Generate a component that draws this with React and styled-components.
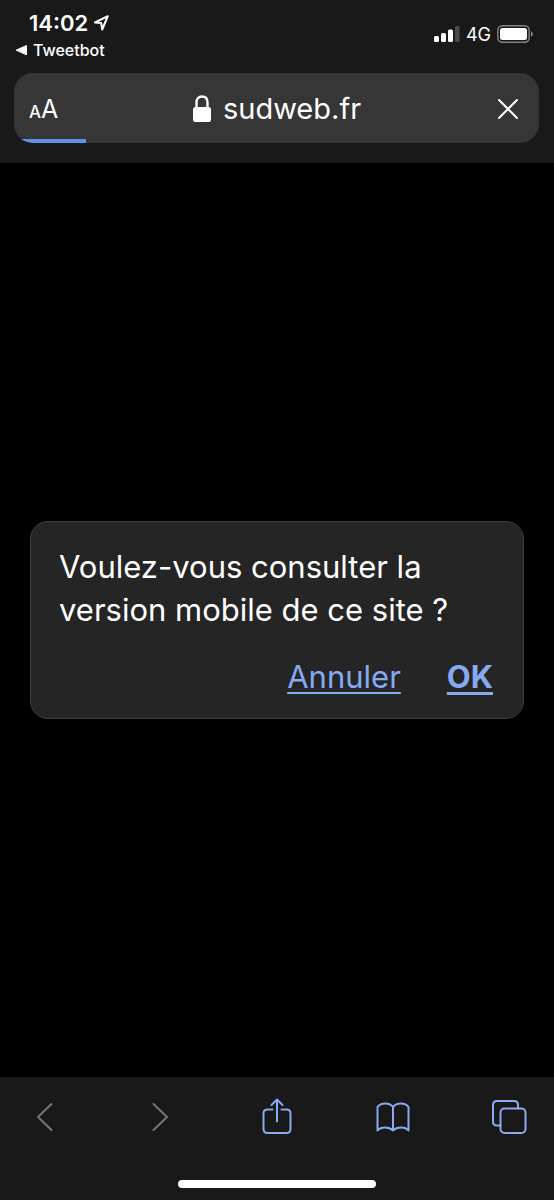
import React from "react";
import styled, { createGlobalStyle } from "styled-components";

const GlobalStyle = createGlobalStyle`
  *, *::before, *::after { box-sizing: border-box; }
  body {
    margin: 0;
    background: #000;
    color: #fff;
    font-family: Inter, "Liberation Sans", sans-serif;
  }
  button { font: inherit; color: inherit; background: none; border: 0; padding: 0; cursor: pointer; }
  svg { display: block; flex: none; }
`;

const Screen = styled.div`
  min-height: 100vh;
  display: flex;
  flex-direction: column;
`;

const Header = styled.header`
  background: #191919;
  padding: 11px 15px 20px 14px;
`;

const StatusBar = styled.div`
  display: flex;
  justify-content: space-between;
  height: 62px;
`;

const StatusLeft = styled.div`
  display: flex;
  flex-direction: column;
  align-items: flex-start;
`;

const Clock = styled.div`
  display: flex;
  align-items: center;
  gap: 6px;
  padding-left: 15px;
  font-size: 22px;
  line-height: 24px;
  font-weight: 600;
`;

const BackToApp = styled.button`
  display: flex;
  align-items: center;
  gap: 6px;
  padding-left: 2px;
  font-size: 16px;
  line-height: 30px;
  font-weight: 500;
`;

const StatusRight = styled.div`
  display: flex;
  align-items: center;
  gap: 6px;
  height: 46px;
  padding-right: 6px;
  font-size: 18px;
`;

const AddressBar = styled.div`
  position: relative;
  overflow: hidden;
  display: grid;
  grid-template-columns: 64px 1fr 64px;
  align-items: center;
  height: 70px;
  padding-top: 2px;
  border-radius: 19px;
  background: #363636;
`;

const TextSizeButton = styled.button`
  display: flex;
  align-items: baseline;
  padding-left: 15px;
  padding-top: 2px;
  font-size: 25px;
  line-height: 32px;
`;

const SmallLetter = styled.span`
  font-size: 17px;
  font-weight: 500;
`;

const SiteButton = styled.button`
  display: flex;
  align-items: center;
  justify-content: center;
  gap: 11px;
  font-size: 29px;
  line-height: 40px;
`;

const StopButton = styled.button`
  display: flex;
  justify-content: flex-end;
  padding-right: 20px;
`;

const Progress = styled.div`
  position: absolute;
  left: 0;
  bottom: 0;
  width: 72px;
  height: 4px;
  background: #5e93e8;
`;

const Page = styled.main`
  flex: 1;
  display: flex;
  align-items: center;
  padding: 30px;
`;

const Dialog = styled.section`
  flex: 1;
  padding: 23px 30px 19px 28px;
  border: 1px solid #3f3f3f;
  border-radius: 18px;
  background: #252525;
`;

const Message = styled.p`
  margin: 0;
  font-size: 31px;
  line-height: 43px;
`;

const Actions = styled.div`
  display: flex;
  justify-content: flex-end;
  gap: 46px;
  margin-top: 24px;
`;

const Action = styled.button`
  font-size: 31px;
  line-height: 44px;
  font-weight: ${(p) => (p.$strong ? 700 : 400)};
  color: #86aaf2;
  text-decoration: underline;
  text-decoration-thickness: ${(p) => (p.$strong ? 3 : 2)}px;
  text-decoration-skip-ink: none;
  text-underline-offset: 4px;
`;

const Footer = styled.footer`
  display: flex;
  flex-direction: column;
  align-items: center;
  padding: 18px 16px 12px;
  background: #191919;
`;

const Toolbar = styled.nav`
  align-self: stretch;
  display: flex;
  justify-content: space-between;
`;

const ToolButton = styled.button`
  display: flex;
  align-items: center;
  justify-content: center;
  width: 58px;
  height: 44px;
  color: #8aaaf0;
  &:disabled { color: #767676; cursor: default; }
`;

const HomeIndicator = styled.div`
  width: 38%;
  height: 8px;
  margin-top: 41px;
  border-radius: 4px;
  background: #fff;
`;

const Icon = ({ width = 36, height = 36, stroke = 2, children }) => (
  <svg width={width} height={height} viewBox={`0 0 ${width} ${height}`} fill="none"
    stroke="currentColor" strokeWidth={stroke} strokeLinecap="round" strokeLinejoin="round" aria-hidden="true">
    {children}
  </svg>
);

export default function App() {
  return (
    <Screen>
      <GlobalStyle />
      <Header>
        <StatusBar>
          <StatusLeft>
            <Clock>
              14:02
              <Icon width={15} height={16}>
                <path d="M1 7.5 L13.8 1.2 L8.2 14.5 L7.2 8 Z" />
              </Icon>
            </Clock>
            <BackToApp type="button">
              <Icon width={11} height={10} stroke={1}>
                <path d="M0.5 5 L10.5 0.5 V9.5 Z" fill="currentColor" />
              </Icon>
              Tweetbot
            </BackToApp>
          </StatusLeft>
          <StatusRight>
            <svg width="26" height="16" viewBox="0 0 26 16" fill="#fff" aria-hidden="true">
              <rect x="0" y="10" width="5" height="6" rx="1.5" />
              <rect x="7" y="7" width="5" height="9" rx="1.5" />
              <rect x="14" y="3.5" width="5" height="12.5" rx="1.5" />
              <rect x="21" y="0" width="4.5" height="16" rx="1.5" fill="#4b4b4b" />
            </svg>
            4G
            <svg width="36" height="18" viewBox="0 0 36 18" aria-hidden="true">
              <rect x="0.8" y="0.8" width="31.4" height="16.4" rx="4.5" fill="none" stroke="#858585" strokeWidth="1.4" />
              <rect x="3" y="3" width="27" height="12" rx="2.5" fill="#fff" />
              <path d="M34 6.2 Q36 7.2 36 9 Q36 10.8 34 11.8 Z" fill="#858585" />
            </svg>
          </StatusRight>
        </StatusBar>
        <AddressBar>
          <TextSizeButton type="button" aria-label="AA">
            <SmallLetter>A</SmallLetter>A
          </TextSizeButton>
          <SiteButton type="button">
            <svg width="20" height="28" viewBox="0 0 20 28" aria-hidden="true">
              <path d="M4.5 13 V7.5 C4.5 3.6 6.8 1.5 10 1.5 S15.5 3.6 15.5 7.5 V13" fill="none" stroke="#fff" strokeWidth="2.4" />
              <rect x="1" y="12" width="18" height="15" rx="2.5" fill="#fff" />
            </svg>
            sudweb.fr
          </SiteButton>
          <StopButton type="button" aria-label="Arrêter le chargement">
            <Icon width={22} height={22}>
              <path d="M2 2 L20 20 M20 2 L2 20" />
            </Icon>
          </StopButton>
          <Progress />
        </AddressBar>
      </Header>
      <Page>
        <Dialog role="dialog" aria-labelledby="question">
          <Message id="question">Voulez-vous consulter la version mobile de ce site ?</Message>
          <Actions>
            <Action type="button">Annuler</Action>
            <Action type="button" $strong>OK</Action>
          </Actions>
        </Dialog>
      </Page>
      <Footer>
        <Toolbar aria-label="Navigation">
          <ToolButton type="button" disabled aria-label="Page précédente">
            <Icon><path d="M24.5 5 L11 18 L24.5 31" /></Icon>
          </ToolButton>
          <ToolButton type="button" disabled aria-label="Page suivante">
            <Icon><path d="M10.5 5 L24 18 L10.5 31" /></Icon>
          </ToolButton>
          <ToolButton type="button" aria-label="Partager">
            <Icon width={36} height={40}>
              <path d="M13.5 12.5 H8.5 Q4.5 12.5 4.5 16.5 V32 Q4.5 36 8.500 36 H27.5 Q31.5 36 31.5 32 V16.5 Q31.5 12.5 27.5 12.5 H22.5" />
              <path d="M18 24.5 V3 M12.5 8 L18 2.5 L23.5 8" />
            </Icon>
          </ToolButton>
          <ToolButton type="button" aria-label="Signets">
            <Icon>
              <path d="M18 8 Q15.5 4.5 10 4.5 Q5 4.500 2.5 8 V31.5 Q5 28.5 10 28.5 Q15 28.5 18 31.5 Q21 28.5 26 28.5 Q31 28.5 33.5 31.5 V8 Q31 4.5 26 4.5 Q20.5 4.5 18 8 V31.5" />
            </Icon>
          </ToolButton>
          <ToolButton type="button" aria-label="Onglets">
            <Icon>
              <path d="M9.5 26.5 H6 Q2 26.5 2 22.5 V6 Q2 2 6 2 H23 Q27 2 27 6 V9.5" />
              <rect x="9.5" y="9.5" width="25" height="24.5" rx="4" />
            </Icon>
          </ToolButton>
        </Toolbar>
        <HomeIndicator />
      </Footer>
    </Screen>
  );
}
